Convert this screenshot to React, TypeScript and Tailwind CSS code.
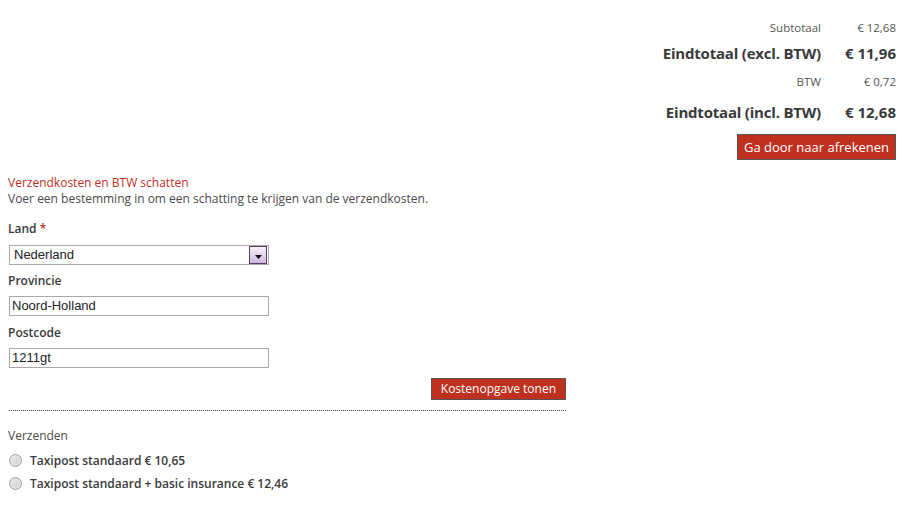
import React from "react";

const font = { fontFamily: '"Open Sans", "DejaVu Sans", sans-serif' };
const inputFont = { fontFamily: '"Liberation Sans", Arial, sans-serif' };

function Radio() {
  return (
    <span className="inline-block w-[13px] h-[13px] rounded-full border border-[#a0a0a0] bg-gradient-to-br from-[#f4f4f4] to-[#c4c4c4] shadow-[inset_0_0_0_2px_#e2e2e2]" />
  );
}

function SelectArrow() {
  return (
    <span className="flex items-end justify-center w-[18px] h-[18px] border border-[#5a3d66] bg-gradient-to-b from-[#f5f0f8] to-[#cdb8dc] pb-[4px]">
      <svg width="7" height="4" viewBox="0 0 7 4">
        <path d="M0 0h7L3.5 4z" fill="#111" />
      </svg>
    </span>
  );
}

export default function App() {
  return (
    <div className="w-[908px] h-[512px] bg-white text-[#4a4a4a] text-[12px]" style={font}>
      {/* Totals */}
      <div className="flex flex-col items-end pr-[12px] pt-[18px]">
        <table className="border-collapse">
          <tbody>
            <tr className="h-[20px] text-[11.5px] text-[#555]">
              <td className="text-right pr-[19px]">Subtotaal</td>
              <td className="text-right w-[56px]">€ 12,68</td>
            </tr>
            <tr className="h-[30px] text-[15px] font-bold text-[#3a3a3a]">
              <td className="text-right pr-[19px] tracking-[-0.2px]">Eindtotaal (excl. BTW)</td>
              <td className="text-right">€ 11,96</td>
            </tr>
            <tr className="h-[28px] text-[11.5px] text-[#555]">
              <td className="text-right pr-[19px]">BTW</td>
              <td className="text-right">€ 0,72</td>
            </tr>
            <tr className="h-[32px] text-[15px] font-bold text-[#3a3a3a]">
              <td className="text-right pr-[19px] tracking-[-0.2px]">Eindtotaal (incl. BTW)</td>
              <td className="text-right">€ 12,68</td>
            </tr>
          </tbody>
        </table>
        <button className="mt-[6px] h-[26px] px-[6px] bg-[#c0301e] border border-[#555] text-white text-[13px] leading-none">
          Ga door naar afrekenen
        </button>
      </div>

      {/* Shipping estimate */}
      <div className="w-[558px] ml-[8px] mt-[15px]">
        <div className="leading-[16px] text-[#c0301e]">Verzendkosten en BTW schatten</div>
        <div className="leading-[16px]">Voer een bestemming in om een schatting te krijgen van de verzendkosten.</div>

        <div className="mt-[14px] leading-[16px] font-semibold text-[#3a3a3a]">
          Land <span className="text-[#c0301e]">*</span>
        </div>
        <div className="mt-[8px] ml-[1px] w-[260px] h-[20px] border border-[#a9a9a9] flex items-center justify-between pl-[4px] pr-[1px]">
          <span className="text-[13px] text-[#222]" style={inputFont}>
            Nederland
          </span>
          <SelectArrow />
        </div>

        <div className="mt-[8px] leading-[16px] font-semibold text-[#3a3a3a]">Provincie</div>
        <div
          className="mt-[7px] ml-[1px] w-[260px] h-[20px] border border-[#a9a9a9] flex items-center pl-[2px] text-[13px] text-[#222]"
          style={inputFont}
        >
          Noord-Holland
        </div>

        <div className="mt-[9px] leading-[16px] font-semibold text-[#3a3a3a]">Postcode</div>
        <div
          className="mt-[7px] ml-[1px] w-[260px] h-[20px] border border-[#a9a9a9] flex items-center pl-[2px] text-[13px] text-[#222]"
          style={inputFont}
        >
          1211gt
        </div>

        <div className="flex justify-end mt-[10px]">
          <button className="h-[22px] px-[9px] bg-[#c0301e] border border-[#555] text-white text-[12px] leading-none">
            Kostenopgave tonen
          </button>
        </div>

        <div className="mt-[10px] ml-[1px] border-t border-dotted border-[#444]" />

        <div className="mt-[17px] leading-[16px]">Verzenden</div>
        <div className="flex items-center gap-[8px] h-[23px] mt-[5px] ml-[1px] font-semibold text-[#3a3a3a]">
          <Radio />
          <span>Taxipost standaard € 10,65</span>
        </div>
        <div className="flex items-center gap-[8px] h-[23px] ml-[1px] font-semibold text-[#3a3a3a]">
          <Radio />
          <span>Taxipost standaard + basic insurance € 12,46</span>
        </div>
      </div>
    </div>
  );
}
